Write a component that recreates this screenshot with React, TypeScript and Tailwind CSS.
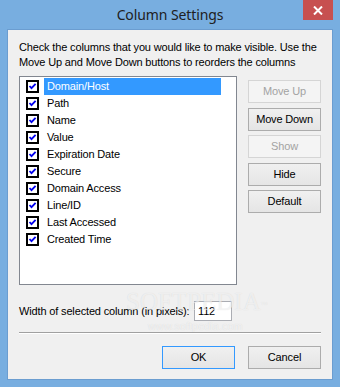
import type { ReactNode } from "react";

const columns = [
  "Domain/Host",
  "Path",
  "Name",
  "Value",
  "Expiration Date",
  "Secure",
  "Domain Access",
  "Line/ID",
  "Last Accessed",
  "Created Time",
];

const CheckBox = () => (
  <span className="flex size-[13px] shrink-0 items-center justify-center border-2 border-black bg-white">
    <svg width="9" height="9" viewBox="0 0 9 9">
      <path d="M1.5 4 L3.5 6.2 L7.6 1.8" fill="none" stroke="#0000ee" strokeWidth="1.8" />
    </svg>
  </span>
);

const Btn = ({
  children,
  disabled,
  primary,
}: {
  children: ReactNode;
  disabled?: boolean;
  primary?: boolean;
}) => (
  <div
    className={
      "flex h-[23px] w-[73px] items-center justify-center border text-[11px] " +
      (disabled
        ? "border-[#d5d5d5] bg-[#f4f4f4] text-[#a3a3a3]"
        : primary
          ? "border-[#3399ff] bg-gradient-to-b from-[#f0f0f0] to-[#e5e5e5] text-black"
          : "border-[#acacac] bg-gradient-to-b from-[#f0f0f0] to-[#e5e5e5] text-black")
    }
  >
    {children}
  </div>
);

export default function App() {
  return (
    <div
      className="flex h-[387px] w-[340px] flex-col bg-[#78aee0]"
      style={{ fontFamily: '"Liberation Sans", Arial, sans-serif' }}
    >
      {/* title bar */}
      <div className="relative flex h-[29px] shrink-0 items-center justify-center">
        <span
          className="pb-[1px] text-[14px] tracking-[-0.1px] text-[#202020]"
          style={{ fontFamily: '"Noto Sans", "Open Sans", sans-serif' }}
        >
          Column Settings
        </span>
        <div className="absolute right-[7px] top-0 flex h-[20px] w-[30px] items-center justify-center bg-[#c75050]">
          <svg width="10" height="9" viewBox="0 0 10 9">
            <path d="M1 0.5 L9 8.5 M9 0.5 L1 8.5" stroke="white" strokeWidth="2" />
          </svg>
        </div>
      </div>

      {/* client area */}
      <div className="relative ml-[7px] h-[351px] w-[326px] border border-[#6b9dd0] bg-[#f0f0f0] px-[11px] text-[11px] tracking-[-0.15px] text-black">
        <p className="mt-[10px] whitespace-nowrap leading-[15px]">
          Check the columns that you would like to make visible. Use the
          <br />
          Move Up and Move Down buttons to reorders the columns
        </p>

        <div className="mt-[6px] flex">
          <div className="h-[209px] w-[218px] border border-[#828790] bg-white pt-[1px]">
            {columns.map((c, i) => (
              <div key={c} className="flex h-[17px] items-center pl-[6px]">
                <CheckBox />
                <span
                  className={
                    "ml-[5px] flex h-[17px] w-[177px] items-center pl-[3px] " +
                    (i === 0 ? "bg-[#3399ff] text-white" : "")
                  }
                >
                  {c}
                </span>
              </div>
            ))}
          </div>
          <div className="ml-[11px] mt-[4px] flex flex-col gap-[4.5px]">
            <Btn disabled>Move Up</Btn>
            <Btn>Move Down</Btn>
            <Btn disabled>Show</Btn>
            <Btn>Hide</Btn>
            <Btn>Default</Btn>
          </div>
        </div>

        <div className="mt-[16px] flex h-[20px] items-center">
          <span className="w-[175px] whitespace-nowrap">Width of selected column (in pixels):</span>
          <div className="flex h-[20px] w-[38px] items-center border border-[#abadb3] bg-white pl-[3px]">
            112
          </div>
        </div>

        <div className="mt-[11px] h-[2px] border-t border-b border-t-[#a0a0a0] border-b-white" />

        <div className="mt-[12px] flex justify-end gap-[13px]">
          <Btn primary>OK</Btn>
          <Btn>Cancel</Btn>
        </div>

        {/* watermark */}
        <span
          className="pointer-events-none absolute left-[118px] top-[257px] text-[25px] leading-[30px] tracking-normal text-white/60 [text-shadow:0_0_1px_rgba(0,0,0,0.12)]"
          style={{ fontFamily: '"Liberation Serif", serif' }}
        >
          SOFTPEDIA<sup className="text-[7px]">™</sup>
        </span>
        <span className="pointer-events-none absolute left-[140px] top-[290px] text-[11px] leading-[12px] tracking-normal text-white/60 [text-shadow:0_0_1px_rgba(0,0,0,0.12)]">
          www.softpedia.com
        </span>
      </div>
    </div>
  );
}
